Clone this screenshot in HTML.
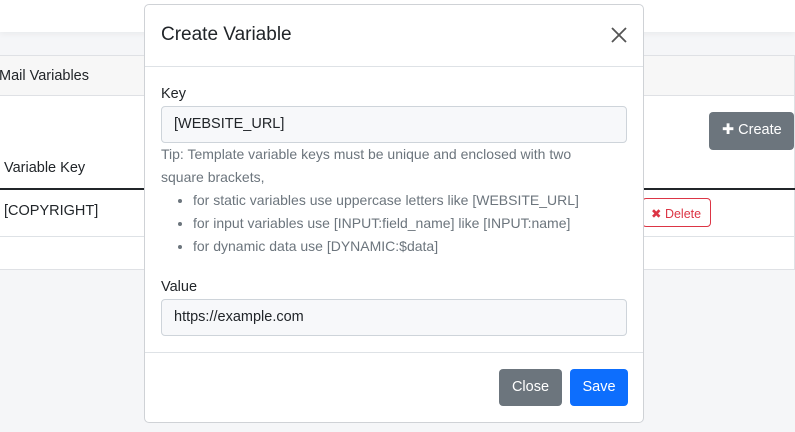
<!DOCTYPE html>
<html><head><meta charset="utf-8"><style>
*{box-sizing:border-box;margin:0;padding:0}
body{width:795px;height:432px;overflow:hidden;background:#f5f6f8;font-family:"Liberation Sans",sans-serif;color:#212529;position:relative;font-size:14px}
.top{position:absolute;left:0;top:0;width:795px;height:32px;background:#fff;box-shadow:0 2px 6px rgba(0,0,0,.05)}
.card{position:absolute;left:-5px;top:55px;width:800px;height:215px;background:#fff;border:1px solid #dfe1e5}
.ch{height:40px;background:#f7f7f7;border-bottom:1px solid #dfe1e5;padding:12px 0 0 3px;font-size:14.5px}
.btnc{position:absolute;left:713px;top:56px;width:85px;height:38px;background:#6c757d;border-radius:4px;color:#fff;font-size:14.5px;padding:10px 0 0 13px}
.th{position:absolute;left:8px;top:104px;font-size:14.5px}
.hl{position:absolute;left:0;top:132px;width:800px;height:2px;background:#212529}
.td{position:absolute;left:8px;top:147px;font-size:14.5px}
.rl{position:absolute;left:0;top:180px;width:800px;height:1px;background:#dee2e6}
.del{position:absolute;left:646px;top:142px;width:69px;height:29px;border:1px solid #dc3545;border-radius:4px;color:#dc3545;font-size:12.5px;padding:7px 0 0 8px}
.modal{position:absolute;left:144px;top:4px;width:500px;height:419px;background:#fff;border:1px solid #cfd2d6;border-radius:5px}
.mh{height:62px;border-bottom:1px solid #dee2e6;padding:19px 16px 0;font-size:19px}
.x{position:absolute;right:14px;top:20px;width:20px;height:20px}
.lbl{position:absolute;left:16px;font-size:14.5px}
.inp{position:absolute;left:16px;width:466px;height:37px;background:#f7f8fa;border:1px solid #ced4da;border-radius:4px;padding:9px 0 0 12px;font-size:14.5px}
.tip{position:absolute;left:16px;top:138px;color:#6c757d;font-size:14px;line-height:23px;width:440px}
.tip ul{margin-left:18px;padding-left:14px}
.mf{position:absolute;left:0;top:347px;width:498px;border-top:1px solid #dee2e6}
.b{position:absolute;top:364px;height:37px;border-radius:4px;color:#fff;font-size:14.5px;text-align:center;padding-top:10px}
</style></head><body>
<div class="top"></div>
<div class="card">
<div class="ch">Mail Variables</div>
<div class="btnc">✚ Create</div>
<div class="th">Variable Key</div>
<div class="hl"></div>
<div class="td">[COPYRIGHT]</div>
<div class="del">✖ Delete</div>
<div class="rl"></div>
</div>
<div class="modal">
<div class="mh">Create Variable</div>
<svg class="x" viewBox="0 0 20 20"><path d="M3 3L17 17M17 3L3 17" stroke="#555" stroke-width="1.8"/></svg>
<div class="lbl" style="top:81px">Key</div>
<div class="inp" style="top:101px">[WEBSITE_URL]</div>
<div class="tip">Tip: Template variable keys must be unique and enclosed with two square brackets,
<ul><li>for static variables use uppercase letters like [WEBSITE_URL]</li><li>for input variables use [INPUT:field_name] like [INPUT:name]</li><li>for dynamic data use [DYNAMIC:$data]</li></ul></div>
<div class="lbl" style="top:274px">Value</div>
<div class="inp" style="top:294px">https://example.com</div>
<div class="mf"></div>
<div class="b" style="left:354px;width:63px;background:#6c757d">Close</div>
<div class="b" style="left:425px;width:58px;background:#0d6efd">Save</div>
</div>
</body></html>
